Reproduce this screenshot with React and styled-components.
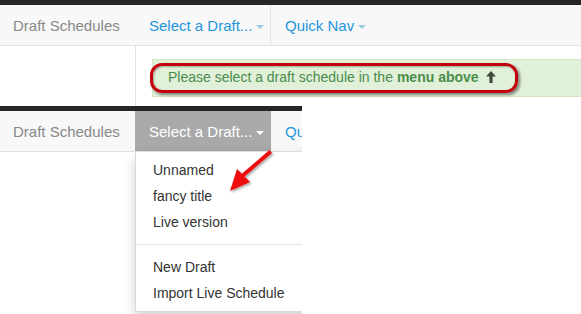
import React from "react";
import styled, { createGlobalStyle } from "styled-components";

const Global = createGlobalStyle`
  html, body { margin: 0; padding: 0; background: #fff; }
  body { font-family: "Liberation Sans", Arial, sans-serif; }
  * { box-sizing: border-box; }
`;

const Page = styled.div`
  position: relative;
  width: 581px;
  height: 314px;
  overflow: hidden;
  background: #fff;
`;

const Shot = styled.div`
  width: ${(p) => p.$width || "100%"};
  display: flex;
  flex-direction: column;
`;

const OverShot = styled(Shot)`
  position: absolute;
  left: 0;
  top: 106px;
  height: 208px;
  background: #fff;
  overflow: hidden;
`;

const DarkBand = styled.div`
  height: 5px;
  flex: none;
  background: #262626;
`;

const Navbar = styled.div`
  height: 41px;
  flex: none;
  display: flex;
  align-items: stretch;
  background: #f8f8f8;
  border-bottom: 1px solid #e3e3e3;
  font-size: 15px;
  line-height: 20px;
  white-space: nowrap;
  position: relative;
`;

const Brand = styled.div`
  width: 135px;
  flex: none;
  padding: 11px 0 0 13px;
  color: #888;
`;

const NavItem = styled.div`
  flex: none;
  width: ${(p) => p.$width || "auto"};
  padding: 11px ${(p) => (p.$edge ? "0" : "14px")} 0 14px;
  color: ${(p) => (p.$active ? "#fff" : "#1f96dc")};
  background: ${(p) => (p.$active ? "#a9a9a9" : "transparent")};
  border-right: ${(p) => (p.$divider ? "1px solid #e6e6e6" : "none")};
  display: flex;
  align-items: flex-start;
  position: relative;
`;

const Caret = styled.span`
  display: inline-block;
  width: 0;
  height: 0;
  margin: 9px 0 0 4px;
  border-left: 4px solid transparent;
  border-right: 4px solid transparent;
  border-top: 4px solid ${(p) => (p.$light ? "#fff" : "#9fcbe8")};
`;

const Body = styled.div`
  flex: 1;
  display: flex;
`;

const Sidebar = styled.div`
  width: 136px;
  height: 60px;
  flex: none;
  border-right: 1px solid #e3e3e3;
`;

const Main = styled.div`
  flex: 1;
  padding: 13px 0 0 16px;
`;

const Alert = styled.div`
  height: 38px;
  padding: 7px 15px 9px 15px;
  background: #e1f0d9;
  border: 1px solid #d3e6c5;
  border-right: none;
  color: #4a8c4a;
  font-size: 14px;
  line-height: 20px;
  white-space: nowrap;
  display: flex;
  align-items: center;
  b { font-weight: bold; margin-left: 4px; }
`;

const UpArrow = styled.svg`
  margin-left: 7px;
  margin-top: -1px;
`;

const Annotation = styled.div`
  position: absolute;
  left: 150px;
  top: 63px;
  width: 368px;
  height: 30px;
  border: 3px solid #c5000d;
  border-radius: 12px;
  box-shadow: 2px 2px 3px rgba(0, 0, 0, 0.45), inset 1px 1px 2px rgba(0, 0, 0, 0.3);
  pointer-events: none;
`;

const Dropdown = styled.ul`
  position: absolute;
  left: 135px;
  top: 41px;
  width: 180px;
  margin: 0;
  padding: 5px 0;
  list-style: none;
  background: #fff;
  border: 1px solid rgba(0, 0, 0, 0.15);
  border-top: none;
  box-shadow: 0 6px 12px rgba(0, 0, 0, 0.175);
  font-size: 14px;
  line-height: 20px;
  color: #333;
  z-index: 2;
`;

const MenuItem = styled.li`
  padding: 3px 17px;
  white-space: nowrap;
`;

const Divider = styled.li`
  height: 1px;
  margin: 9px 0;
  background: #e5e5e5;
`;

const ArrowSvg = styled.svg`
  position: absolute;
  left: 220px;
  top: 144px;
  z-index: 5;
  overflow: visible;
`;

export default function App() {
  return (
    <Page>
      <Global />
      <Shot>
        <DarkBand />
        <Navbar>
          <Brand>Draft Schedules</Brand>
          <NavItem $width="136px" $divider>
            Select a Draft...
            <Caret />
          </NavItem>
          <NavItem>
            Quick Nav
            <Caret />
          </NavItem>
        </Navbar>
        <Body>
          <Sidebar />
          <Main>
            <Alert>
              Please select a draft schedule in the <b>menu above</b>
              <UpArrow width="10" height="12" viewBox="0 0 10 12">
                <path d="M5 0 L10 5.5 L6.6 5.5 L6.6 12 L3.4 12 L3.4 5.5 L0 5.5 Z" fill="#3f4a3f" />
              </UpArrow>
            </Alert>
          </Main>
        </Body>
      </Shot>
      <Annotation />
      <OverShot $width="302px">
        <DarkBand />
        <Navbar>
          <Brand>Draft Schedules</Brand>
          <NavItem $width="136px" $active>
            Select a Draft...
            <Caret $light />
          </NavItem>
          <NavItem $edge>Qu</NavItem>
          <Dropdown>
            <MenuItem>Unnamed</MenuItem>
            <MenuItem>fancy title</MenuItem>
            <MenuItem>Live version</MenuItem>
            <Divider />
            <MenuItem>New Draft</MenuItem>
            <MenuItem>Import Live Schedule</MenuItem>
          </Dropdown>
        </Navbar>
      </OverShot>
      <ArrowSvg width="60" height="52" viewBox="0 0 60 52">
        <defs>
          <filter id="sh" x="-20%" y="-20%" width="150%" height="150%">
            <feDropShadow dx="1.5" dy="1.5" stdDeviation="1" floodColor="#000" floodOpacity="0.35" />
          </filter>
        </defs>
        <g filter="url(#sh)" fill="#ee0a0a" stroke="none">
          <path d="M49.5 6 L52 9 L24 33 L21.5 30 Z" />
          <path d="M10 47 L17 25 L30 38 Z" />
        </g>
      </ArrowSvg>
    </Page>
  );
}
